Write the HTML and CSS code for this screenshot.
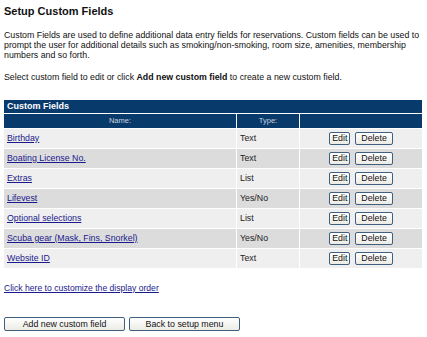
FILE: index.html
```html
<!DOCTYPE html>
<html>
<head>
<meta charset="utf-8">
<link rel="stylesheet" href="styles.css">
</head>
<body>
<div class="page">
  <h1 class="title">Setup Custom Fields</h1>
  <p class="intro">Custom Fields are used to define additional data entry fields for reservations. Custom fields can be used to prompt the user for additional details such as smoking/non-smoking, room size, amenities, membership numbers and so forth.</p>
  <p class="hint">Select custom field to edit or click <b>Add new custom field</b> to create a new custom field.</p>
  <table class="fields">
    <colgroup><col class="c-name"><col class="c-type"><col class="c-act"></colgroup>
    <tr class="cap"><td colspan="3">Custom Fields</td></tr>
    <tr class="head"><td>Name:</td><td>Type:</td><td></td></tr>
    <tr class="row odd"><td><a href="#">Birthday</a></td><td>Text</td><td class="act"><button class="btn">Edit</button><button class="btn">Delete</button></td></tr>
    <tr class="row even"><td><a href="#">Boating License No.</a></td><td>Text</td><td class="act"><button class="btn">Edit</button><button class="btn">Delete</button></td></tr>
    <tr class="row odd"><td><a href="#">Extras</a></td><td>List</td><td class="act"><button class="btn">Edit</button><button class="btn">Delete</button></td></tr>
    <tr class="row even"><td><a href="#">Lifevest</a></td><td>Yes/No</td><td class="act"><button class="btn">Edit</button><button class="btn">Delete</button></td></tr>
    <tr class="row odd"><td><a href="#">Optional selections</a></td><td>List</td><td class="act"><button class="btn">Edit</button><button class="btn">Delete</button></td></tr>
    <tr class="row even"><td><a href="#">Scuba gear (Mask, Fins, Snorkel)</a></td><td>Yes/No</td><td class="act"><button class="btn">Edit</button><button class="btn">Delete</button></td></tr>
    <tr class="row odd"><td><a href="#">Website ID</a></td><td>Text</td><td class="act"><button class="btn">Edit</button><button class="btn">Delete</button></td></tr>
  </table>
  <p class="order"><a href="#">Click here to customize the display order</a></p>
  <div class="actions">
    <button class="btn big add">Add new custom field</button>
    <button class="btn big back">Back to setup menu</button>
  </div>
</div>
</body>
</html>
```
FILE: styles.css
```css
html, body { margin: 0; padding: 0; background: #fff; }
body { font-family: "Liberation Sans", Arial, sans-serif; color: #111; font-size: 8.8px; }
.page { padding: 5px 4px 0 4px; width: 418px; }
.title { font-size: 11px; line-height: 13px; font-weight: bold; margin: 0 0 11.5px 0; color: #111; }
.intro { margin: 0 0 12px 0; line-height: 10px; }
.hint { margin: 0 0 17.5px 0; line-height: 10px; }
a { color: #1a1a8c; text-decoration: underline; }
.fields { border-collapse: separate; border-spacing: 1px; width: 420px; margin-left: -1px; background: #fff; table-layout: fixed; }
.c-name { width: 232px; }
.c-type { width: 62px; }
.fields td { padding: 0 3px; font-size: 8.8px; }
.cap td { background: #083a6c; color: #fff; font-weight: bold; height: 13px; line-height: 13px; font-size: 9px; }
.head td { background: #083a6c; color: #c8d2de; height: 14px; line-height: 14px; text-align: center; font-size: 7.5px; }
.row td { height: 19px; line-height: 19px; color: #222; }
.odd td { background: #efefef; }
.even td { background: #dcdcdc; }
.act { text-align: center; white-space: nowrap; }
.btn { font-family: "Liberation Sans", Arial, sans-serif; font-size: 8.8px; color: #111; background: linear-gradient(#ffffff, #ecebe4); border: 1px solid #3f5f80; border-radius: 2px; height: 13px; line-height: 11px; padding: 0 2px; margin: 0; vertical-align: middle; }
.act .btn + .btn { margin-left: 5px; padding: 0 5px; }
.order { margin: 13.5px 0 0 0; line-height: 10px; font-size: 8.6px; }
.actions { margin-top: 24.5px; display: flex; gap: 4px; }
.big { height: 14px; line-height: 12px; }
.add { width: 121px; }
.back { width: 111px; }
```
